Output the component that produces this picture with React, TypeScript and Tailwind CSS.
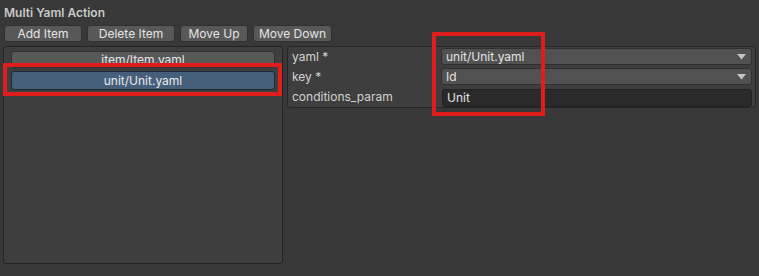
import { Fragment } from "react";

const buttons = [
  { label: "Add Item", w: "w-[78px]" },
  { label: "Delete Item", w: "w-[88px]" },
  { label: "Move Up", w: "w-[68px]" },
  { label: "Move Down", w: "w-[79px]" },
];

function Caret() {
  return (
    <svg width="9" height="6" viewBox="0 0 9 6" className="shrink-0">
      <path d="M0 0 H9 L4.5 5.5 Z" fill="#c4c4c4" />
    </svg>
  );
}

export default function App() {
  return (
    <div
      className="relative w-[759px] h-[276px] overflow-hidden bg-[#383838] text-[#d2d2d2] text-[12px] leading-[16px]"
      style={{ fontFamily: "Inter, 'Noto Sans', sans-serif" }}
    >
      <div className="px-[4px] pt-[5px] font-semibold text-[#c8c8c8] h-[25px]">Multi Yaml Action</div>

      {/* Toolbar */}
      <div className="flex gap-[5px] pl-[4px]">
        {buttons.map((b) => (
          <button
            key={b.label}
            className={`${b.w} h-[17px] rounded-[3px] bg-[#585858] border border-[#303030] text-[#e4e4e4] text-[12px] leading-[15px] flex items-center justify-center`}
          >
            {b.label}
          </button>
        ))}
      </div>

      <div className="flex gap-[4px] pl-[3px] pt-[4px]">
        {/* List */}
        <div className="w-[280px] h-[218px] rounded-[3px] bg-[#3e3e3e] border border-[#232323] px-[7px] pt-[4px] flex flex-col gap-[3px]">
          <div className="h-[17px] rounded-[3px] bg-[#585858] border border-[#303030] flex items-center justify-center text-[#e4e4e4]">
            item/Item.yaml
          </div>
          <div className="h-[19px] rounded-[3px] bg-[#46607c] border border-[#1c2a38] flex items-center justify-center text-[#eaeaea]">
            unit/Unit.yaml
          </div>
        </div>

        {/* Fields */}
        <div className="w-[469px] h-[62px] rounded-[3px] bg-[#3e3e3e] border border-[#262626] pl-[3px] pr-[3px] pt-[1px] grid grid-cols-[150px_1fr] gap-y-[3px] content-start">
          {[
            { label: "yaml *", value: "unit/Unit.yaml", drop: true },
            { label: "key *", value: "Id", drop: true },
            { label: "conditions_param", value: "Unit", drop: false },
          ].map((f) => (
            <Fragment key={f.label}>
              <div className="h-[17px] pl-[1px] flex items-center">{f.label}</div>
              {f.drop ? (
                <div className="h-[17px] rounded-[3px] bg-[#515151] border border-[#303030] flex items-center justify-between pl-[4px] pr-[5px] text-[#e4e4e4]">
                  <span>{f.value}</span>
                  <Caret />
                </div>
              ) : (
                <div className="h-[18px] ml-[1px] mt-[1px] rounded-[3px] bg-[#2a2a2a] border border-[#212121] flex items-center pl-[4px] text-[#e4e4e4]">
                  {f.value}
                </div>
              )}
            </Fragment>
          ))}
        </div>
      </div>

      {/* Annotation boxes */}
      <div className="absolute left-[3px] top-[63px] w-[279px] h-[33px] border-[4px] border-[#e01d1d]" />
      <div className="absolute left-[432px] top-[32px] w-[113px] h-[84px] border-[4px] border-[#e01d1d]" />
    </div>
  );
}
